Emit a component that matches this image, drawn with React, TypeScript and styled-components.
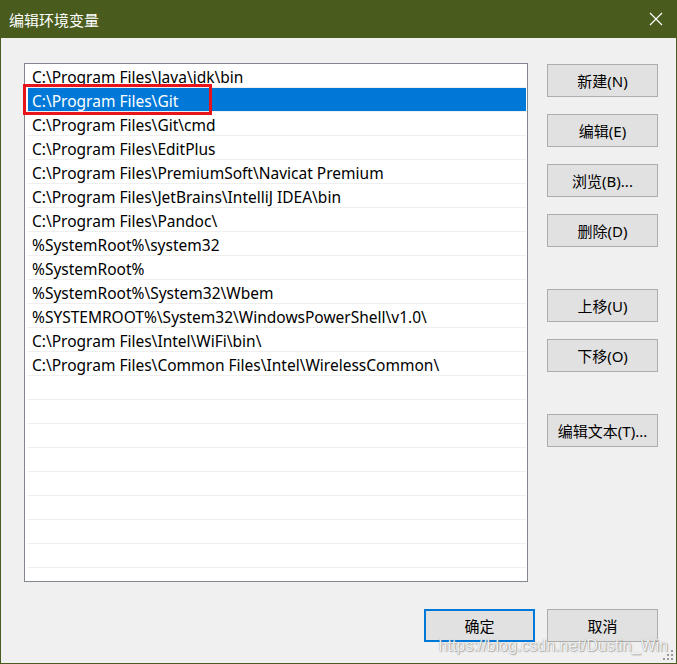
import React from "react";
import styled, {createGlobalStyle} from "styled-components";

const GlobalStyle = createGlobalStyle`
    html, body {
        margin: 0;
        padding: 0;
        background: #f0f0f0;
    }
`

const UI_FONT = `"Segoe UI", "Noto Sans", "Noto Sans CJK SC", sans-serif`

const Window = styled.div`
    position: relative;
    width: 677px;
    height: 664px;
    box-sizing: border-box;
    background: #4a5c1d;
    display: flex;
    flex-direction: column;
    font-family: ${UI_FONT};
    overflow: hidden;
`

const TitleBar = styled.div`
    height: 38px;
    flex: none;
    display: flex;
    align-items: center;
    justify-content: space-between;
    padding: 0 14px 0 9px;
    color: white;
    font-size: 15px;
    font-family: "Noto Sans CJK SC", sans-serif;
`

const Body = styled.div`
    flex: 1;
    margin: 0 1px 1px 1px;
    background: #f0f0f0;
    padding: 25px 0 0 23px;
    display: flex;
    flex-direction: column;
`

const MainRow = styled.div`
    display: flex;
`

const ListBox = styled.div`
    width: 504px;
    height: 519px;
    box-sizing: border-box;
    border: 1px solid #828790;
    background: white;
    padding: 0 1px 0 3px;
    overflow: hidden;
`

const Row = styled.div<{ selected?: boolean }>`
    height: 24px;
    box-sizing: border-box;
    border-bottom: 1px solid #efefef;
    display: flex;
    align-items: center;
    padding: 3px 0 0 4px;
    font-size: 15.5px;
    white-space: nowrap;
    color: ${props => props.selected ? `white` : `#000`};
    background: ${props => props.selected ? `#0078d7` : `transparent`};
`

const Highlight = styled.div`
    position: absolute;
    left: 23px;
    top: 84px;
    width: 189px;
    height: 31px;
    box-sizing: border-box;
    border: 3px solid #e8141b;
    pointer-events: none;
`

const ButtonColumn = styled.div`
    display: flex;
    flex-direction: column;
    margin-left: 19px;
    padding-top: 1px;
`

const Button = styled.button<{ space?: number, primary?: boolean }>`
    width: 111px;
    height: 33px;
    margin-top: ${props => props.space || 0}px;
    box-sizing: border-box;
    background: #e1e1e1;
    border: ${props => props.primary ? `2px solid #0078d7` : `1px solid #adadad`};
    color: #000;
    font-size: 15px;
    font-family: ${UI_FONT};
    padding: 0;
    &:focus {
        outline: none;
    }
`

const Footer = styled.div`
    display: flex;
    justify-content: flex-end;
    gap: 12px;
    padding: 27px 18px 0 0;
`

const Watermark = styled.div`
    position: absolute;
    right: 9px;
    bottom: 9px;
    font-family: "Liberation Sans", Arial, sans-serif;
    font-size: 16px;
    color: rgba(255, 255, 255, 0.9);
    text-shadow: 0 0 1px rgba(90, 90, 90, 0.6), 1px 1px 1px rgba(120, 120, 120, 0.5);
    pointer-events: none;
`

const Grip = styled.svg`
    position: absolute;
    right: 3px;
    bottom: 3px;
`

const paths = [
    "C:\\Program Files\\Java\\jdk\\bin",
    "C:\\Program Files\\Git",
    "C:\\Program Files\\Git\\cmd",
    "C:\\Program Files\\EditPlus",
    "C:\\Program Files\\PremiumSoft\\Navicat Premium",
    "C:\\Program Files\\JetBrains\\IntelliJ IDEA\\bin",
    "C:\\Program Files\\Pandoc\\",
    "%SystemRoot%\\system32",
    "%SystemRoot%",
    "%SystemRoot%\\System32\\Wbem",
    "%SYSTEMROOT%\\System32\\WindowsPowerShell\\v1.0\\",
    "C:\\Program Files\\Intel\\WiFi\\bin\\",
    "C:\\Program Files\\Common Files\\Intel\\WirelessCommon\\",
]

const rows = [...paths, ...Array(9).fill("")]

export default function App() {
    return (
        <>
            <GlobalStyle/>
            <Window>
                <TitleBar>
                    <span>编辑环境变量</span>
                    <svg width="14" height="14" viewBox="0 0 14 14">
                        <path d="M1 1 L13 13 M13 1 L1 13" stroke="white" strokeWidth="1.2" fill="none"/>
                    </svg>
                </TitleBar>
                <Body>
                    <MainRow>
                        <ListBox>
                            {rows.map((p, i) => (
                                <Row key={i} selected={i === 1}>{p}</Row>
                            ))}
                        </ListBox>
                        <ButtonColumn>
                            <Button>新建(N)</Button>
                            <Button space={17}>编辑(E)</Button>
                            <Button space={17}>浏览(B)...</Button>
                            <Button space={17}>删除(D)</Button>
                            <Button space={42}>上移(U)</Button>
                            <Button space={17}>下移(O)</Button>
                            <Button space={42}>编辑文本(T)...</Button>
                        </ButtonColumn>
                    </MainRow>
                    <Footer>
                        <Button primary>确定</Button>
                        <Button>取消</Button>
                    </Footer>
                </Body>
                <Highlight/>
                <Watermark>https://blog.csdn.net/Dustin_Win</Watermark>
                <Grip width="11" height="11" viewBox="0 0 11 11">
                    <rect x="8" y="0" width="2" height="2" fill="#9a9a9a"/>
                    <rect x="4" y="4" width="2" height="2" fill="#9a9a9a"/>
                    <rect x="8" y="4" width="2" height="2" fill="#9a9a9a"/>
                    <rect x="0" y="8" width="2" height="2" fill="#9a9a9a"/>
                    <rect x="4" y="8" width="2" height="2" fill="#9a9a9a"/>
                    <rect x="8" y="8" width="2" height="2" fill="#9a9a9a"/>
                </Grip>
            </Window>
        </>
    )
}
